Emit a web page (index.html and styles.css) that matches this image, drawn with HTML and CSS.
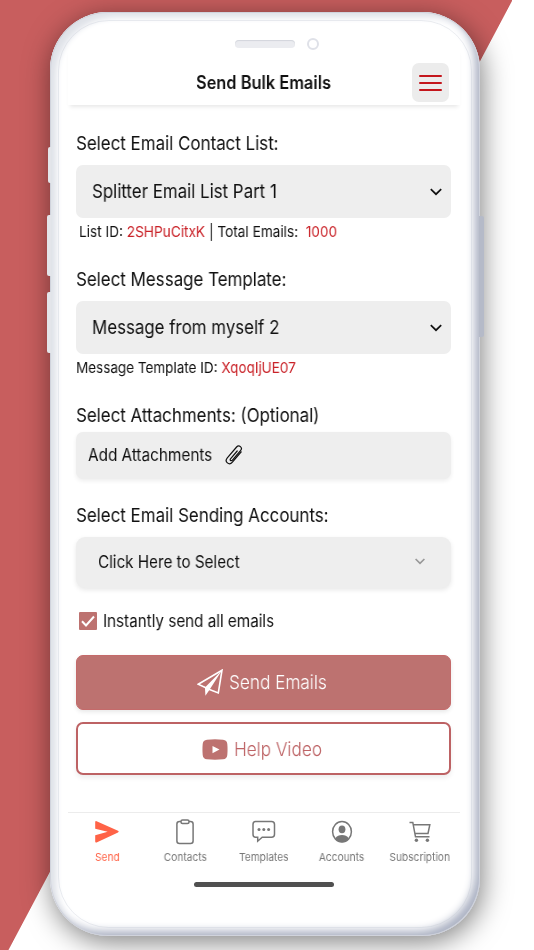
FILE: index.html
```
<!DOCTYPE html>
<html lang="en">

<head>
    <meta charset="UTF-8">
    <meta name="viewport" content="width=device-width, initial-scale=1.0">
    <title>Send Bulk Emails</title>
    <link rel="stylesheet" href="styles.css">
</head>

<body>
    <div class="phone">
        <div class="side-button mute"></div>
        <div class="side-button volume-up"></div>
        <div class="side-button volume-down"></div>
        <div class="side-button power"></div>
        <div class="rim"></div>

        <div class="notch">
            <div class="speaker"></div>
            <div class="camera"></div>
        </div>

        <div class="screen">
            <header class="header">
                <h1><span class="t">Send Bulk Emails</span></h1>
                <button class="menu-button" aria-label="Menu">
                    <span class="bar"></span>
                    <span class="bar"></span>
                    <span class="bar"></span>
                </button>
            </header>

            <main class="content">
                <div class="label"><span class="t">Select Email Contact List:</span></div>
                <div class="select">
                    <span class="t">Splitter Email List Part 1</span>
                    <svg class="chevron" width="12" height="8" viewBox="0 0 12 8"><path d="M.8 1.200l5.200 5 5.200-5" /></svg>
                </div>
                <div class="info list-info"><span class="t">List ID: <span class="red">2SHPuCitxK</span> | Total Emails: &nbsp;<span class="red">1000</span></span></div>

                <div class="label"><span class="t">Select Message Template:</span></div>
                <div class="select">
                    <span class="t">Message from myself 2</span>
                    <svg class="chevron" width="12" height="8" viewBox="0 0 12 8"><path d="M.8 1.200l5.200 5 5.200-5" /></svg>
                </div>
                <div class="info"><span class="t">Message Template ID: <span class="red">XqoqIjUE07</span></span></div>

                <div class="label attach-label"><span class="t">Select Attachments: (Optional)</span></div>
                <div class="attach">
                    <span class="t">Add Attachments</span>
                    <svg class="clip" width="18" height="20" viewBox="0 0 18 20">
                        <path d="M12.200 6l-6.500 7.600c-1.300 1.500.4 3 1.700 1.500l8.300-9.700c2.300-2.800-1.700-6.200-4.100-3.400L2.300 12.800c-3.300 4 1.800 8.200 5.100 4.300l8.800-10.200" />
                    </svg>
                </div>

                <div class="label accounts-label"><span class="t">Select Email Sending Accounts:</span></div>
                <div class="accounts">
                    <span class="t">Click Here to Select</span>
                    <svg class="chevron grey" width="10" height="7" viewBox="0 0 10 7"><path d="M.6 1l4.400 4.400 4.400-4.400" /></svg>
                </div>

                <div class="check-row">
                    <span class="checkbox">
                        <svg width="18" height="18" viewBox="0 0 18 18"><path d="M3 9.300l4 4.200 8-9" /></svg>
                    </span>
                    <span class="t">Instantly send all emails</span>
                </div>

                <button class="send-button">
                    <svg width="26" height="27" viewBox="0 0 26 27">
                        <path class="outline" d="M1.200 15.200L25 1.200l-3.700 22.700-8.800-3.500z" />
                        <path class="fill" d="M1.200 15.200l7 3 16.800-17-12.300 19.300-4.300 6.300-.5-9z" />
                    </svg>
                    <span class="t">Send Emails</span>
                </button>

                <button class="help-button">
                    <svg width="26" height="21" viewBox="0 0 26 21">
                        <path class="tube" d="M5 .7Q13-.2 21 .7q4 .4 4.300 4.300.5 5.500 0 11-.3 3.900-4.300 4.300-8 .8-16 0Q1 19.900.7 16 .2 10.500.7 5 1 1.100 5 .7z" />
                        <path class="play" d="M10.500 6.900v7.400l7-3.700z" />
                    </svg>
                    <span class="t">Help Video</span>
                </button>
            </main>

            <nav class="tabs">
                <a class="tab active">
                    <svg width="26" height="26" viewBox="0 0 26 26">
                        <path class="solid" d="M1.200 3.200Q1.200 1.700 2.600 2.200L24 11.700q1.600.8 0 1.700L2.600 23.400q-1.400.5-1.400-1v-6.200l12.500-3.400L1.200 9.700z" />
                    </svg>
                    <span class="t">Send</span>
                </a>
                <a class="tab">
                    <svg width="26" height="26" viewBox="0 0 26 26">
                        <path d="M9 2.500H7.500Q4.900 2.500 4.900 5v17q0 2.500 2.600 2.500h11q2.600 0 2.600-2.500V5q0-2.500-2.600-2.500H17" />
                        <rect x="9" y="1" width="8" height="3.400" rx="1.500" />
                    </svg>
                    <span class="t">Contacts</span>
                </a>
                <a class="tab">
                    <svg width="26" height="26" viewBox="0 0 26 26">
                        <path d="M4.500 2.500h16q3 0 3 3v9.700q0 3-3 3h-9.300l-4.500 4v-4H4.500q-2.500 0-2.500-3V5.500q0-3 2.500-3z" />
                        <circle class="dot" cx="8" cy="10.600" r="1.500" />
                        <circle class="dot" cx="12.800" cy="10.600" r="1.500" />
                        <circle class="dot" cx="17.600" cy="10.600" r="1.500" />
                    </svg>
                    <span class="t">Templates</span>
                </a>
                <a class="tab">
                    <svg width="26" height="26" viewBox="0 0 26 26">
                        <ellipse cx="13" cy="12.800" rx="9.400" ry="10.200" />
                        <ellipse class="dot" cx="13" cy="10.300" rx="3.400" ry="3.900" />
                        <path class="dot" d="M6.300 19.300q2.300-3.300 6.700-3.300t6.700 3.300Q17 23.200 13 23.200t-6.700-3.900z" />
                    </svg>
                    <span class="t">Accounts</span>
                </a>
                <a class="tab">
                    <svg width="26" height="26" viewBox="0 0 26 26">
                        <path d="M2.500 3.400h3.300l2.700 14.400h14M6.300 5.800h16.500l-1.800 8.700H8" />
                        <circle class="dot" cx="9.400" cy="21.300" r="1.700" />
                        <circle class="dot" cx="20.400" cy="21.300" r="1.700" />
                    </svg>
                    <span class="t">Subscription</span>
                </a>
            </nav>
            <div class="home-bar"></div>
        </div>
    </div>
</body>

</html>
```
FILE: styles.css
```
* {
    box-sizing: border-box;
}

body {
    margin: 0;
    height: 950px;
    padding: 12px 54px 0 50px;
    overflow: hidden;
    font-family: Inter, "Liberation Sans", sans-serif;
    color: #111;
    background: linear-gradient(to bottom right, #c85e5e 50%, #fff 50.1%) 0 0 / 512px 965px no-repeat #fff;
}

.phone {
    position: relative;
    width: 430px;
    height: 924px;
    padding: 27px 20px 0 18px;
    border-radius: 58px;
    background: #fff;
    box-shadow: 2px 6px 28px rgba(0, 0, 0, 0.5),
        inset 0 0 0 1px #d0d3dc,
        inset -7px -7px 8px -2px #adb3c4,
        inset 8px 7px 6px -2px #dfe2e8,
        inset 0 0 14px #eceef3;
}

/* thin line between the frame and the glass */
.rim {
    position: absolute;
    top: 8px;
    right: 8px;
    bottom: 8px;
    left: 8px;
    border: 1px solid rgba(190, 195, 210, 0.3);
    border-radius: 51px;
}

.side-button {
    position: absolute;
    left: -3px;
    width: 4px;
    border-radius: 2px 0 0 2px;
    background: #e3e5ea;
}

.mute {
    top: 135px;
    left: -2px;
    width: 3px;
    height: 36px;
}

.volume-up {
    top: 203px;
    height: 61px;
}

.volume-down {
    top: 280px;
    height: 61px;
}

.power {
    top: 204px;
    left: 429px;
    width: 5px;
    height: 121px;
    background: #b5bac8;
    border-radius: 0 2px 2px 0;
}

.notch {
    position: relative;
    display: flex;
    align-items: center;
    height: 9px;
    padding-left: 167px;
    gap: 12px;
}

.speaker {
    width: 60px;
    height: 8px;
    border-radius: 4px;
    background: #ebecf0;
    box-shadow: inset 0 1px 1px #d3d5dc;
}

.camera {
    width: 12px;
    height: 12px;
    border-radius: 50%;
    border: 2px solid #dfe1e8;
    background: #fff;
}

.screen {
    position: relative;
    height: 848px;
    background: linear-gradient(rgba(255, 255, 255, 0) 57px, #fff 57px);
}

.t {
    display: inline-block;
    white-space: nowrap;
    transform: scaleX(0.895);
    transform-origin: left center;
    will-change: transform;
}

.header {
    height: 57px;
    display: flex;
    align-items: center;
    justify-content: flex-end;
    padding: 12px 11px 0 128px;
    box-shadow: 0 4px 4px -2px #e8e8e8;
}

.header h1 {
    flex: 1;
    margin: 0;
    font-size: 18px;
    font-weight: 600;
    line-height: 24px;
}

.header .t {
    transform: scaleX(0.91);
}

.menu-button {
    width: 37px;
    height: 39px;
    padding: 0 7px;
    border: none;
    border-radius: 7px;
    background: #ececec;
    display: flex;
    flex-direction: column;
    justify-content: center;
    gap: 5px;
}

.bar {
    height: 2px;
    border-radius: 1px;
    background: #c4161c;
}

.content {
    height: 707px;
    padding: 27px 9px 0 8px;
}

.label {
    height: 24px;
    line-height: 24px;
    font-size: 19px;
    margin-bottom: 9px;
}

.label .t {
    transform: scaleX(0.89);
}

.select,
.attach,
.accounts {
    display: flex;
    align-items: center;
    background: #eee;
    border-radius: 7px;
}

.select {
    height: 53px;
    padding: 0 9px 0 16px;
    font-size: 19px;
}

.select .t {
    transform: scaleX(0.888);
}

.chevron {
    margin-left: auto;
    fill: none;
    stroke: #111;
    stroke-width: 1.700;
}

.chevron.grey {
    stroke: #999;
}

.info {
    height: 20px;
    line-height: 20px;
    margin: 4px 0 26px;
    font-size: 15px;
}

.info .t {
    transform: scaleX(0.9);
}

.list-info {
    padding-left: 3px;
}

.list-info .t {
    transform: scaleX(0.909);
}

.red {
    color: #c92127;
}

.attach-label {
    margin-bottom: 4px;
}

.attach {
    height: 47px;
    padding: 0 0 2px 12px;
    font-size: 17px;
    box-shadow: 0 2px 4px #eee;
}

.attach .t {
    transform: scaleX(0.9);
}

.clip {
    margin-left: -1px;
    fill: none;
    stroke: #111;
    stroke-width: 1.200;
    stroke-linecap: round;
}

.accounts-label {
    margin-top: 25px;
}

.accounts {
    height: 51px;
    padding: 0 26px 2px 22px;
    font-size: 17px;
    border-radius: 9px;
    box-shadow: 0 2px 5px #e8e8e8;
}

.check-row {
    display: flex;
    align-items: center;
    gap: 6px;
    height: 20px;
    margin: 23px 0 24px;
    padding-left: 3px;
    font-size: 17px;
}

.checkbox {
    width: 18px;
    height: 18px;
    border-radius: 1px;
    background: #bd7270;
}

.checkbox svg {
    display: block;
    fill: none;
    stroke: #fff;
    stroke-width: 2;
}

.send-button,
.help-button {
    display: flex;
    align-items: center;
    width: 100%;
    border-radius: 7px;
    font-family: inherit;
    font-size: 19px;
    font-weight: 300;
}

.send-button .t,
.help-button .t {
    transform: scaleX(0.905);
}

.send-button {
    height: 55px;
    padding: 0 0 0 120px;
    gap: 6px;
    border: 1px solid #c56a6a;
    background: #bd7270;
    color: #fff;
    box-shadow: 0 2px 4px #e8e8e8;
}

.send-button .outline {
    fill: none;
    stroke: #fff;
    stroke-width: 1.600;
}

.send-button .fill {
    fill: #fff;
}

.help-button {
    height: 53px;
    margin-top: 12px;
    padding: 1px 0 0 124px;
    gap: 6px;
    border: 2px solid #bd6264;
    background: #fff;
    color: #bd6264;
    box-shadow: 0 3px 5px #eee;
}

.tube {
    fill: #bd7270;
}

.play {
    fill: #fff;
}

.tabs {
    display: flex;
    height: 69px;
    padding: 6px 1px 0 0;
    border-top: 1px solid #ececec;
}

.tab {
    flex: 1;
    display: flex;
    flex-direction: column;
    align-items: center;
    font-size: 11px;
    line-height: 14px;
    color: #777;
}

.tab svg {
    margin-bottom: 5px;
    fill: none;
    stroke: #777;
    stroke-width: 1.500;
}

.tab .t {
    transform: scaleX(0.925);
    transform-origin: center;
}

.tab .dot {
    fill: #777;
    stroke: none;
}

.tab.active {
    color: #ff6347;
}

.tab .solid {
    fill: #ff6347;
    stroke: none;
}

.home-bar {
    width: 140px;
    height: 5px;
    margin: 1px auto 0;
    border-radius: 3px;
    background: #505050;
}
```
